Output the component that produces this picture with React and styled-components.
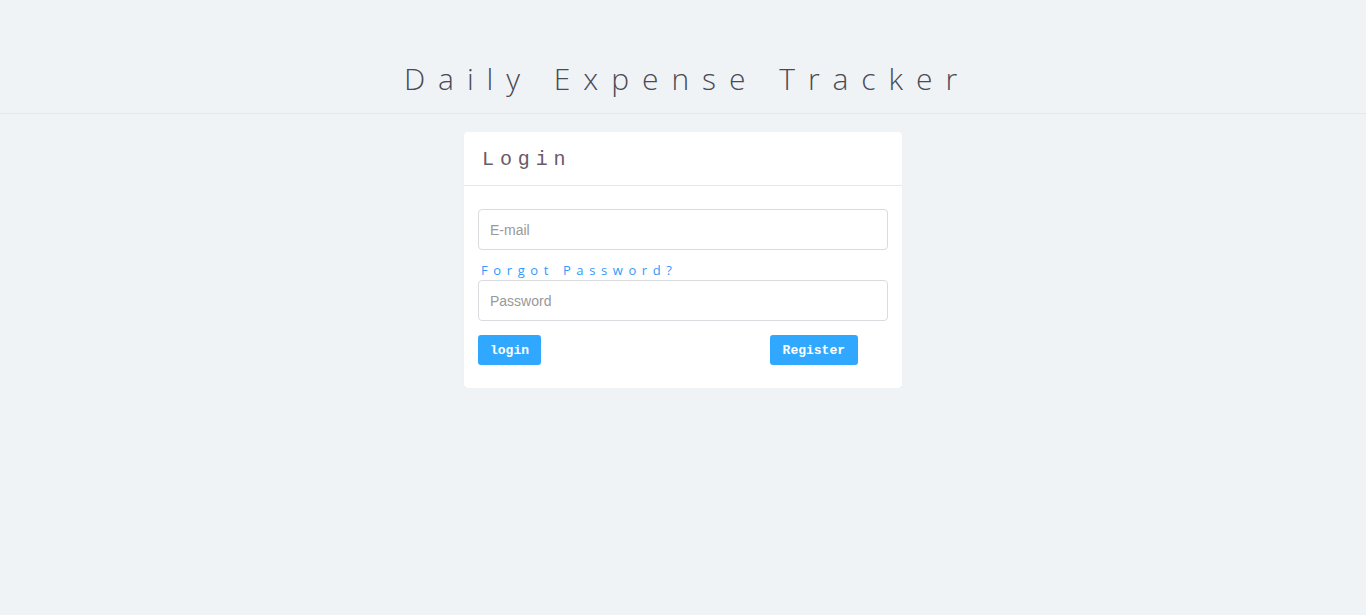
import React, { useState } from "react";
import styled, { createGlobalStyle } from "styled-components";

const GlobalStyle = createGlobalStyle`
  html, body {
    margin: 0;
    padding: 0;
    background: #f0f3f6;
  }
  body {
    font-family: "Open Sans", "Liberation Sans", Arial, sans-serif;
    color: #444;
  }
  input::placeholder {
    color: #999;
  }
`;

// mimics a bootstrap row with negative gutters, which pushes the page a bit wider
const Row = styled.div`
  margin: 0 -15px;
`;

const Header = styled.header`
  height: 114px;
  border-bottom: 1px solid #e4e8ec;
  display: flex;
  align-items: center;
  justify-content: center;
  padding-top: 44px;
  box-sizing: border-box;
`;

const Title = styled.h1`
  margin: 0;
  font-family: "Open Sans", "Liberation Sans", sans-serif;
  font-weight: 300;
  font-size: 30px;
  letter-spacing: 12.95px;
  color: #4a4a55;
  padding-left: 8px;
`;

const Card = styled.div`
  width: 438px;
  margin: 18px auto 0;
  background: #fff;
  border-radius: 4px;
  box-shadow: 0 1px 1px rgba(0, 0, 0, 0.06);
`;

const CardHeader = styled.div`
  height: 53px;
  border-bottom: 1px solid #e6e8ec;
  display: flex;
  align-items: center;
  padding: 0 18px;
`;

const CardTitle = styled.h2`
  margin: 0;
  font-family: "Liberation Mono", "DejaVu Sans Mono", monospace;
  font-weight: normal;
  font-size: 20px;
  letter-spacing: 5.9px;
  color: #6a5a6a;
  padding-top: 2px;
`;

const CardBody = styled.form`
  padding: 23px 14px 23px;
  display: flex;
  flex-direction: column;
`;

const Input = styled.input`
  height: 41px;
  box-sizing: border-box;
  width: 100%;
  border: 1px solid #d9dbdf;
  border-radius: 4px;
  padding: 0 11px;
  font-family: "Liberation Sans", Arial, sans-serif;
  font-size: 14px;
  color: #333;
  outline: none;
  background: #fff;
`;

const ForgotLink = styled.a`
  display: block;
  margin: 10px 0 0 3px;
  font-family: "Open Sans", "Liberation Sans", sans-serif;
  font-size: 13px;
  letter-spacing: 5.6px;
  line-height: 20px;
  color: #3399ff;
  text-decoration: none;
  cursor: pointer;
`;

const Actions = styled.div`
  display: flex;
  justify-content: space-between;
  align-items: center;
  margin-top: 14px;
  padding-right: 30px;
`;

const Button = styled.button`
  height: 30px;
  padding: 0 ${(p) => (p.$wide ? 13 : 12)}px;
  border: none;
  border-radius: 3px;
  background: #30a8ff;
  color: #fff;
  font-family: "Liberation Mono", "Courier New", monospace;
  font-weight: bold;
  font-size: 13px;
  cursor: pointer;
`;

export default function App() {
  const [email, setEmail] = useState("");
  const [password, setPassword] = useState("");

  return (
    <Row>
      <GlobalStyle />
      <Header>
        <Title>Daily Expense Tracker</Title>
      </Header>
      <Card>
        <CardHeader>
          <CardTitle>Login</CardTitle>
        </CardHeader>
        <CardBody onSubmit={(e) => e.preventDefault()}>
          <Input
            type="email"
            placeholder="E-mail"
            value={email}
            onChange={(e) => setEmail(e.target.value)}
          />
          <ForgotLink>Forgot Password?</ForgotLink>
          <Input
            type="password"
            placeholder="Password"
            value={password}
            onChange={(e) => setPassword(e.target.value)}
          />
          <Actions>
            <Button type="submit">login</Button>
            <Button type="button" $wide>
              Register
            </Button>
          </Actions>
        </CardBody>
      </Card>
    </Row>
  );
}
